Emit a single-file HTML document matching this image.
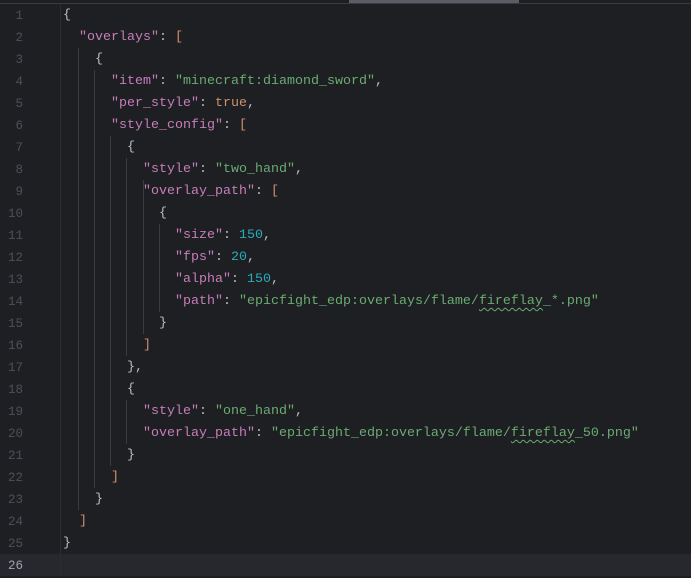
<!DOCTYPE html>
<html><head><style>
body{margin:0;background:#1e1f22;width:691px;height:576px;overflow:hidden;position:relative;font-family:"Liberation Mono",monospace;font-size:13.33px}
.top{position:absolute;left:0;top:0;width:691px;height:3px;background:#1e1f22;border-bottom:1px solid #393b40}
.thumb{position:absolute;left:349px;top:0;width:170px;height:3px;background:#5a5d63}
.gut{position:absolute;left:60px;top:4px;width:1px;height:572px;background:#2b2d30}
.cur{position:absolute;left:0;top:554px;width:691px;height:22px;background:#26282e}
.ln{position:absolute;left:0;width:23px;text-align:right;color:#4b5059;height:22px;line-height:24px;font-size:12.5px}
.ln.c{color:#a1a3ab}
.code{position:absolute;left:63px;height:22px;line-height:24px;white-space:pre;color:#bcbec4}
.k{color:#c77dbb}.s{color:#6aab73}.n{color:#2aacb8}.b{color:#cf8e6d}
.g{position:absolute;width:1px;background:#393b40}
.w{text-decoration:underline wavy #6aab73;text-decoration-thickness:1px;text-underline-offset:3px}
</style></head><body>
<div class="cur"></div>
<div class="top"></div><div class="thumb"></div>
<div class="gut"></div>
<div class="g" style="left:78px;top:48px;height:462px"></div>
<div class="g" style="left:94px;top:70px;height:418px"></div>
<div class="g" style="left:110px;top:136px;height:330px"></div>
<div class="g" style="left:126px;top:158px;height:198px"></div>
<div class="g" style="left:126px;top:400px;height:44px"></div>
<div class="g" style="left:143px;top:180px;height:154px"></div>
<div class="g" style="left:159px;top:224px;height:88px"></div>
<div class="ln" style="top:4px">1</div><div class="ln" style="top:26px">2</div><div class="ln" style="top:48px">3</div><div class="ln" style="top:70px">4</div><div class="ln" style="top:92px">5</div><div class="ln" style="top:114px">6</div><div class="ln" style="top:136px">7</div><div class="ln" style="top:158px">8</div><div class="ln" style="top:180px">9</div><div class="ln" style="top:202px">10</div><div class="ln" style="top:224px">11</div><div class="ln" style="top:246px">12</div><div class="ln" style="top:268px">13</div><div class="ln" style="top:290px">14</div><div class="ln" style="top:312px">15</div><div class="ln" style="top:334px">16</div><div class="ln" style="top:356px">17</div><div class="ln" style="top:378px">18</div><div class="ln" style="top:400px">19</div><div class="ln" style="top:422px">20</div><div class="ln" style="top:444px">21</div><div class="ln" style="top:466px">22</div><div class="ln" style="top:488px">23</div><div class="ln" style="top:510px">24</div><div class="ln" style="top:532px">25</div><div class="ln c" style="top:554px">26</div>
<div class="code" style="top:4px">{</div>
<div class="code" style="top:26px">  <span class="k">"overlays"</span>: <span class="b">[</span></div>
<div class="code" style="top:48px">    {</div>
<div class="code" style="top:70px">      <span class="k">"item"</span>: <span class="s">"minecraft:diamond_sword"</span>,</div>
<div class="code" style="top:92px">      <span class="k">"per_style"</span>: <span class="b">true</span>,</div>
<div class="code" style="top:114px">      <span class="k">"style_config"</span>: <span class="b">[</span></div>
<div class="code" style="top:136px">        {</div>
<div class="code" style="top:158px">          <span class="k">"style"</span>: <span class="s">"two_hand"</span>,</div>
<div class="code" style="top:180px">          <span class="k">"overlay_path"</span>: <span class="b">[</span></div>
<div class="code" style="top:202px">            {</div>
<div class="code" style="top:224px">              <span class="k">"size"</span>: <span class="n">150</span>,</div>
<div class="code" style="top:246px">              <span class="k">"fps"</span>: <span class="n">20</span>,</div>
<div class="code" style="top:268px">              <span class="k">"alpha"</span>: <span class="n">150</span>,</div>
<div class="code" style="top:290px">              <span class="k">"path"</span>: <span class="s">"epicfight_edp:overlays/flame/<span class="w">fireflay</span>_*.png"</span></div>
<div class="code" style="top:312px">            }</div>
<div class="code" style="top:334px">          <span class="b">]</span></div>
<div class="code" style="top:356px">        },</div>
<div class="code" style="top:378px">        {</div>
<div class="code" style="top:400px">          <span class="k">"style"</span>: <span class="s">"one_hand"</span>,</div>
<div class="code" style="top:422px">          <span class="k">"overlay_path"</span>: <span class="s">"epicfight_edp:overlays/flame/<span class="w">fireflay</span>_50.png"</span></div>
<div class="code" style="top:444px">        }</div>
<div class="code" style="top:466px">      <span class="b">]</span></div>
<div class="code" style="top:488px">    }</div>
<div class="code" style="top:510px">  <span class="b">]</span></div>
<div class="code" style="top:532px">}</div>
</body></html>
